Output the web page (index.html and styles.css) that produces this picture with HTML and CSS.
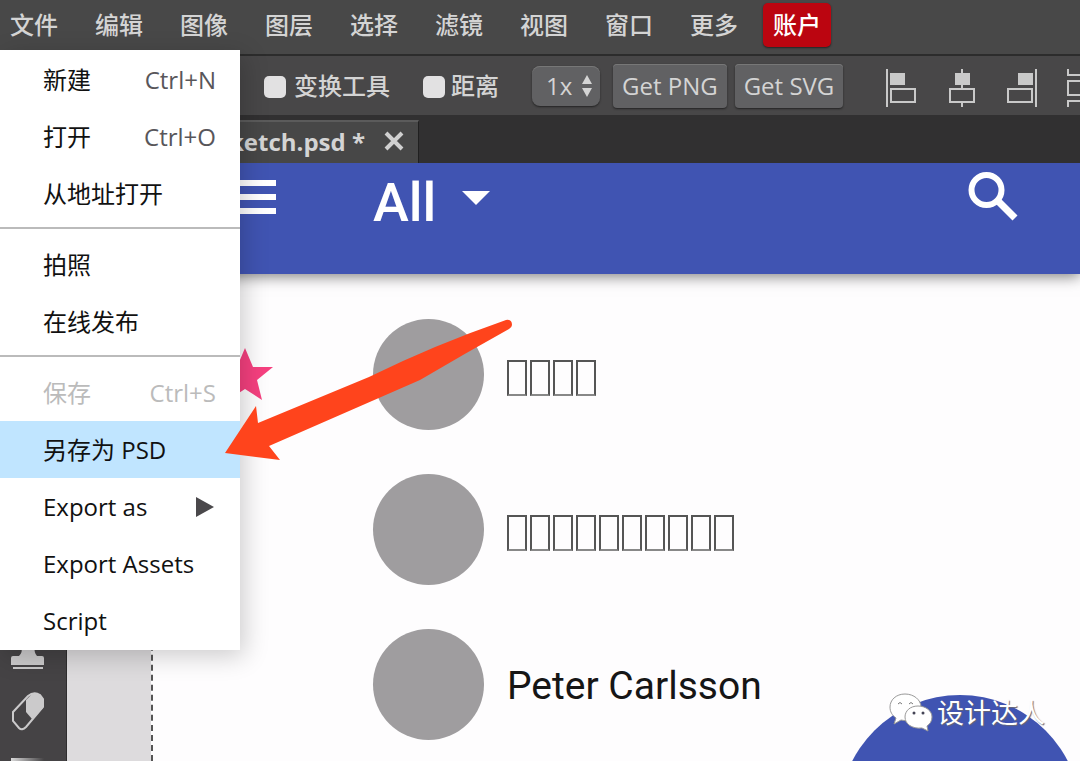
FILE: index.html
```html
<!DOCTYPE html>
<html lang="zh-CN">
<head>
<meta charset="utf-8">
<title>sketch.psd</title>
<link rel="stylesheet" href="styles.css">
</head>
<body>
<div class="app">
  <nav class="menubar">
    <button>文件</button><button>编辑</button><button>图像</button><button>图层</button><button>选择</button><button>滤镜</button><button>视图</button><button>窗口</button><button>更多</button><button class="account">账户</button>
  </nav>

  <div class="toolbar">
    <label class="check"><input type="checkbox">变换工具</label>
    <label class="check distance"><input type="checkbox">距离</label>
    <div class="zoom">
      <select aria-label="缩放"><option>1x</option></select>
      <svg width="12" height="24" viewBox="0 0 12 24"><path d="M6 1l5 9H1zM6 23l5-9H1z" fill="#d4d4d4"/></svg>
    </div>
    <button class="push png">Get PNG</button>
    <button class="push">Get SVG</button>
    <div class="align">
      <button aria-label="左对齐"><svg width="32" height="38" viewBox="0 0 32 38"><path d="M1 0v38" class="line"/><path d="M4 4h15v12H4z" class="solid"/><path d="M5 20h24v13H5z" class="line"/></svg></button>
      <button aria-label="水平居中"><svg width="32" height="38" viewBox="0 0 32 38"><path d="M16 0v19M16 34v4" class="line"/><path d="M9 4h15v12H9z" class="solid"/><path d="M4 20h24v13H4z" class="line"/></svg></button>
      <button aria-label="右对齐"><svg width="32" height="38" viewBox="0 0 32 38"><path d="M30 0v38" class="line"/><path d="M12 4h15v12H12z" class="solid"/><path d="M2 20h24v13H2z" class="line"/></svg></button>
      <button aria-label="分布"><svg width="32" height="38" viewBox="0 0 32 38"><path d="M2 0v6h28V0M2 38v-6h28v6M2 12h28v14H2z" class="line"/></svg></button>
    </div>
  </div>

  <div class="tabs">
    <div class="tab"><span>sketch.psd *</span>
      <button aria-label="关闭"><svg width="20" height="20" viewBox="0 0 20 20"><path d="M2 2l16 16M18 2L2 18" stroke="#d0d0d0" stroke-width="4"/></svg></button>
    </div>
  </div>

  <div class="workspace">
    <aside class="tools">
      <button aria-label="图章"><svg width="34" height="44" viewBox="0 0 34 44"><path d="M9 10h16c-2 6-2 9 1 13h5q2 0 2 2v7H0v-7q0-2 2-2h6c4-4 3-7 1-13z" fill="#cbcacb"/><path d="M2 35h30" stroke="#cbcacb" stroke-width="2"/></svg></button>
      <button aria-label="橡皮擦"><svg width="34" height="44" viewBox="0 0 34 44"><path d="M15 10l6-6q4-2 8 1l3 4v9L21 29l-6-7z" fill="#cbcacb"/><path d="M2 22L17 6q6-5 12-1l3 4v8L15 37q-4 4-7 1l-6-7z" fill="none" stroke="#cbcacb" stroke-width="2"/></svg></button>
      <button aria-label="渐变"><svg width="34" height="26" viewBox="0 0 34 26"><defs><linearGradient id="fade"><stop stop-color="#ddd"/><stop offset="1" stop-color="#454345"/></linearGradient></defs><path d="M-1 2h34v24H-1z" fill="url(#fade)"/></svg></button>
    </aside>
    <div class="gutter"></div>
    <main class="artboard">
      <header class="appbar">
        <svg class="burger" width="72" height="34" viewBox="0 0 72 34"><path d="M0 3h72M0 17h72M0 31h72" stroke="#fff" stroke-width="6"/></svg>
        <span class="title">All</span>
        <svg class="caret" width="28" height="14" viewBox="0 0 28 14"><path d="M0 0h28L14 14z" fill="#fff"/></svg>
        <svg class="search" width="50" height="50" viewBox="0 0 50 50"><circle cx="18.500" cy="18" r="15" fill="none" stroke="#fff" stroke-width="6"/><path d="M29 28l18 18" stroke="#fff" stroke-width="7"/></svg>
      </header>
      <ul class="contacts">
        <li>
          <svg class="star" width="58" height="56" viewBox="-29 -29 58 56"><path d="M0-28L8-9 28-9 12 4 17 24 0 13-17 24-12 4-28-9-8-9z" fill="#f6407f"/></svg>
          <i class="avatar"></i>
          <span class="boxes"><i></i><i></i><i></i><i></i></span>
        </li>
        <li>
          <i class="avatar"></i>
          <span class="boxes"><i></i><i></i><i></i><i></i><i></i><i></i><i></i><i></i><i></i><i></i></span>
        </li>
        <li><i class="avatar"></i><span>Peter Carlsson</span></li>
      </ul>
      <div class="fab"></div>
      <div class="credit">
        <svg width="44" height="40" viewBox="0 0 44 40"><g fill="#fff" stroke="#999" stroke-width="1"><path d="M16 2C7 2 1 8 1 15c0 5 2 8 6 11l-2 6 7-4c12 3 20-4 20-13C32 8 25 2 16 2z"/><path d="M29 14c-8 0-13 5-13 11 0 7 7 12 17 11l6 3-1-5c3-2 5-5 5-9 0-6-6-11-14-11z"/></g><path d="M9 12q2-3 4 0M20 12q2-3 4 0" fill="none" stroke="#777" stroke-width="1"/><circle cx="25" cy="21" r="1.500" fill="#445"/><circle cx="34" cy="21" r="1.500" fill="#445"/></svg>
        <span>设计达人</span>
      </div>
    </main>
  </div>

  <div class="menu" role="menu">
    <button>新建<kbd>Ctrl+N</kbd></button>
    <button>打开<kbd>Ctrl+O</kbd></button>
    <button>从地址打开</button>
    <hr>
    <button>拍照</button>
    <button>在线发布</button>
    <hr>
    <button disabled>保存<kbd>Ctrl+S</kbd></button>
    <button class="active">另存为 PSD</button>
    <button>Export as<svg width="19" height="20" viewBox="0 0 19 20"><path d="M0 0l18 10L0 20z" fill="#4a484b"/></svg></button>
    <button>Export Assets</button>
    <button>Script</button>
  </div>

  <svg class="arrow" width="290" height="144" viewBox="0 0 290 144"><path d="M1 135L32 88l2 17L145 59Q210 27 282 2q6-1 6 5 0 2-3 4Q240 36 196 62L45 128l11 14z" fill="#ff441c"/></svg>
</div>
</body>
</html>
```
FILE: styles.css
```css
* { box-sizing: border-box; }
body {
  margin: 0;
  font-family: "Open Sans", "Noto Sans CJK SC", sans-serif;
  font-size: 24px;
  line-height: 32px;
}
button, select {
  margin: 0;
  padding: 0;
  border: 0;
  background: none;
  color: inherit;
  font: inherit;
}
svg { display: block; flex: none; }
.app {
  position: relative;
  display: flex;
  flex-direction: column;
  height: 100vh;
  overflow: hidden;
  color: #d4d4d4;
}

.menubar {
  display: flex;
  flex: none;
  gap: 17px;
  height: 54px;
  padding-top: 3px;
  background: #484848;
  font-weight: 500;
}
.menubar button {
  flex: none;
  height: 44px;
  padding: 0 10px;
}
.menubar .account {
  margin-left: -2px;
  border-radius: 5px;
  background: #bb0510;
  color: #fff;
  box-shadow: 0 1px 2px #222;
}

.toolbar {
  display: flex;
  flex: none;
  align-items: center;
  height: 61px;
  padding-left: 264px;
  border-top: 2px solid #2c2c2c;
  background: #484748;
  overflow: hidden;
}
.check {
  display: flex;
  flex: none;
  align-items: center;
  gap: 8px;
  font-weight: 500;
}
.check input {
  appearance: none;
  width: 22px;
  height: 22px;
  margin: 3px 0 0;
  border-radius: 5px;
  background: #e2e1e2;
}
.distance { gap: 6px; margin: 0 33px; }
.zoom {
  display: flex;
  flex: none;
  align-items: center;
  width: 68px;
  height: 40px;
  padding: 0 7px 0 14px;
  border-radius: 8px;
  background: #616163;
  box-shadow: 0 1px 2px #222, inset 0 1px #777;
}
.zoom select { appearance: none; flex: 1; min-width: 0; }
.push {
  flex: none;
  height: 44px;
  padding: 0 9px;
  border-radius: 4px;
  background: #616163;
  box-shadow: 0 1px 2px #222, inset 0 1px #777;
}
.png { margin: 0 8px 0 13px; }
.align {
  display: flex;
  flex: none;
  gap: 28px;
  margin: 4px 0 0 43px;
}
.line { fill: none; stroke: #c9c9c9; stroke-width: 2; }
.solid { fill: #c9c9c9; }

.tabs {
  display: flex;
  flex: none;
  height: 48px;
  padding-top: 5px;
  background: #313031;
}
.tab {
  display: flex;
  align-items: flex-start;
  justify-content: flex-end;
  gap: 19px;
  width: 419px;
  padding: 4px 14px 0 0;
  border-top: 2px solid #5b5b5b;
  border-right: 1px solid #202020;
  background: #474747;
  font-weight: 700;
}
.tab button { padding-top: 5px; }

.workspace { display: flex; flex: 1; min-height: 0; }
.tools {
  flex: none;
  width: 67px;
  padding-top: 463px;
  border-right: 1px solid #2e2d2e;
  background: #454345;
  overflow: hidden;
}
.tools button {
  display: flex;
  align-items: center;
  height: 57px;
  padding-left: 11px;
}
.gutter { flex: none; width: 84px; background: #dddbdd; }
.artboard {
  position: relative;
  flex: 1;
  min-width: 0;
  border-left: 2px dashed #555;
  background: #fefdfe;
  color: #161616;
  font-family: Roboto, sans-serif;
  overflow: hidden;
}
.appbar {
  display: flex;
  align-items: flex-start;
  height: 111px;
  padding: 9px 62px 0 51px;
  background: #4054b2;
  box-shadow: 0 2px 14px #777;
  color: #fff;
}
.burger { margin-top: 8px; }
.title {
  margin: 1px 26px 0 97px;
  font-size: 54px;
  font-weight: 500;
  line-height: 60px;
}
.caret { margin-top: 19px; }
.search { margin-left: auto; }
.contacts {
  margin: 0;
  padding: 23px 0 0 63px;
  list-style: none;
  font-size: 39px;
}
.contacts li {
  display: flex;
  align-items: center;
  height: 155px;
  padding-left: 157px;
}
.contacts span { padding-top: 3px; }
.star { margin: 0 99px 0 -157px; }
.avatar {
  flex: none;
  width: 111px;
  height: 111px;
  margin-right: 23px;
  border-radius: 50%;
  background: #9f9d9f;
}
.contacts .boxes { display: flex; gap: 3px; padding-top: 7px; }
.boxes i {
  width: 20px;
  height: 36px;
  border: 2px solid #555;
  border-bottom-color: #888;
}
.fab {
  position: absolute;
  right: -1px;
  bottom: -176px;
  width: 242px;
  height: 242px;
  border-radius: 50%;
  background: #4054b2;
}
.credit {
  position: absolute;
  right: 35px;
  bottom: 29px;
  display: flex;
  align-items: center;
  gap: 4px;
  color: #fff;
  font-family: "Noto Sans CJK SC", sans-serif;
  font-size: 27px;
  text-shadow: 1px 1px 1px #667;
}

.menu {
  position: absolute;
  top: 50px;
  left: 0;
  width: 240px;
  padding: 1px 0;
  background: #fff;
  box-shadow: 4px 6px 24px rgba(0, 0, 0, 0.2);
  color: #111;
}
.menu button {
  display: flex;
  align-items: center;
  justify-content: space-between;
  width: 100%;
  height: 57px;
  padding: 0 24px 0 43px;
  text-align: left;
}
.menu svg { margin-right: 1px; }
.menu kbd { color: #58565a; font: inherit; }
.menu button:disabled, .menu button:disabled kbd { color: #bbb; }
.menu .active { background: #c0e5ff; }
.menu hr {
  height: 2px;
  margin: 5px 0 7px;
  border: 0;
  background: #bbb;
}
.arrow { position: absolute; top: 318px; left: 224px; }
```
